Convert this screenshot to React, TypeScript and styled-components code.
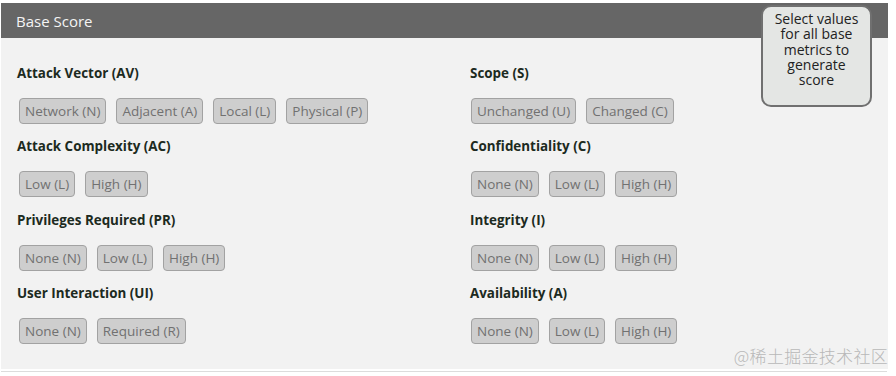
import React from "react";
import styled, { createGlobalStyle } from "styled-components";

const Global = createGlobalStyle`
  html, body { margin: 0; padding: 0; background: #ffffff; }
  body { font-family: "Open Sans", "Noto Sans", sans-serif; }
`;

const Page = styled.div`
  width: 896px;
  height: 376px;
  padding: 3px 0 0 1px;
  box-sizing: border-box;
  position: relative;
`;

const Panel = styled.section`
  width: 887px;
  position: relative;
`;

const Header = styled.div`
  height: 35px;
  background: #666666;
  color: #f4f4f4;
  font-size: 15px;
  display: flex;
  align-items: center;
  padding-left: 15px;
`;

const Body = styled.div`
  background: #f2f2f2;
  height: 331px;
  padding: 26px 0 0 16px;
  box-sizing: border-box;
  display: grid;
  grid-template-columns: 453px 1fr;
`;

const Column = styled.div<{ $inset: number }>`
  display: flex;
  flex-direction: column;
  gap: 13.3px;
  --inset: ${(p) => p.$inset}px;
`;

const Group = styled.div`
  display: flex;
  flex-direction: column;
`;

const Label = styled.div`
  font-weight: 700;
  font-size: 13.4px;
  line-height: 18px;
  color: #1c2a21;
  margin-bottom: 16px;
`;

const Buttons = styled.div`
  display: flex;
  gap: 10px;
  padding-left: var(--inset);
`;

const Btn = styled.span`
  height: 26px;
  box-sizing: border-box;
  display: inline-flex;
  align-items: center;
  padding: 0 5px;
  border: 1px solid #a2a2a2;
  border-radius: 4px;
  background: #cecece;
  color: #717171;
  font-size: 13.5px;
`;

const ScoreBox = styled.div`
  position: absolute;
  left: 760px;
  top: 2px;
  width: 111px;
  height: 102px;
  box-sizing: border-box;
  border: 2px solid #707070;
  border-radius: 10px;
  background: #e4e6e4;
  color: #222;
  font-size: 14px;
  line-height: 15.25px;
  text-align: center;
  padding: 4px 5px 0;
`;

const Footer = styled.div`
  margin-top: 2px;
  height: 1px;
  width: 886px;
  background: #dcdcdc;
`;

const Watermark = styled.div`
  position: absolute;
  right: 8px;
  bottom: 8px;
  font-family: "Noto Sans CJK SC", sans-serif;
  font-weight: 300;
  font-size: 17px;
  color: #b8b8b8;
  letter-spacing: 0.3px;
`;

type Metric = { label: string; options: string[] };

const left: Metric[] = [
  { label: "Attack Vector (AV)", options: ["Network (N)", "Adjacent (A)", "Local (L)", "Physical (P)"] },
  { label: "Attack Complexity (AC)", options: ["Low (L)", "High (H)"] },
  { label: "Privileges Required (PR)", options: ["None (N)", "Low (L)", "High (H)"] },
  { label: "User Interaction (UI)", options: ["None (N)", "Required (R)"] },
];

const right: Metric[] = [
  { label: "Scope (S)", options: ["Unchanged (U)", "Changed (C)"] },
  { label: "Confidentiality (C)", options: ["None (N)", "Low (L)", "High (H)"] },
  { label: "Integrity (I)", options: ["None (N)", "Low (L)", "High (H)"] },
  { label: "Availability (A)", options: ["None (N)", "Low (L)", "High (H)"] },
];

const MetricColumn = ({ metrics, inset }: { metrics: Metric[]; inset: number }) => (
  <Column $inset={inset}>
    {metrics.map((m) => (
      <Group key={m.label}>
        <Label>{m.label}</Label>
        <Buttons>
          {m.options.map((o) => (
            <Btn key={o}>{o}</Btn>
          ))}
        </Buttons>
      </Group>
    ))}
  </Column>
);

export default function App() {
  return (
    <>
      <Global />
      <Page>
        <Panel>
          <Header>Base Score</Header>
          <Body>
            <MetricColumn metrics={left} inset={2} />
            <MetricColumn metrics={right} inset={1} />
          </Body>
          <ScoreBox>Select values for all base metrics to generate score</ScoreBox>
        </Panel>
        <Footer />
        <Watermark>@稀土掘金技术社区</Watermark>
      </Page>
    </>
  );
}
